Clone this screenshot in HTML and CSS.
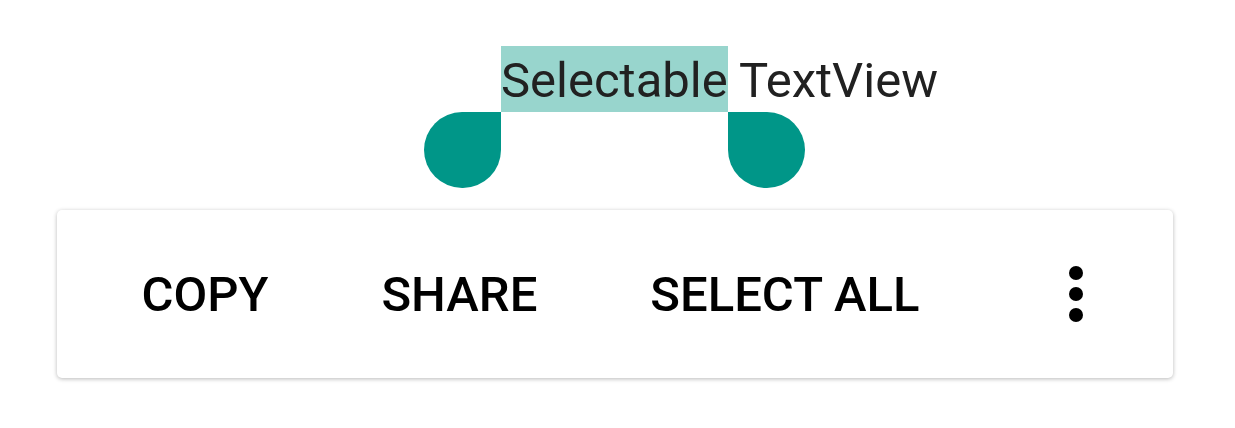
FILE: index.html
```html
<!DOCTYPE html>
<html>
<head>
<meta charset="utf-8">
<link rel="stylesheet" href="styles.css">
</head>
<body>
  <div class="page">
    <div class="text-row">
      <p class="text"><span class="sel">Selectable<span class="handle handle-left"></span><span class="handle handle-right"></span></span> TextView</p>
    </div>
    <div class="toolbar">
      <button class="btn btn-first">COPY</button>
      <button class="btn">SHARE</button>
      <button class="btn">SELECT ALL</button>
      <button class="overflow" aria-label="More options">
        <svg width="14" height="56" viewBox="0 0 14 56">
          <circle cx="7" cy="7" r="7" fill="#000"/>
          <circle cx="7" cy="28" r="7" fill="#000"/>
          <circle cx="7" cy="49" r="7" fill="#000"/>
        </svg>
      </button>
    </div>
  </div>
</body>
</html>
```

FILE: styles.css
```css
html, body {
  margin: 0;
  padding: 0;
  background: #ffffff;
}

.page {
  width: 1235px;
  height: 428px;
  font-family: Roboto, "Noto Sans", sans-serif;
}

.text-row {
  padding-top: 46px;
  padding-left: 501px;
  height: 188px;
  box-sizing: border-box;
}

.text {
  margin: 0;
  font-size: 49px;
  line-height: 62px;
  color: #212121;
  white-space: nowrap;
}

.sel {
  position: relative;
  display: inline-block;
  background: #98d5cd;
  line-height: 62px;
  padding-top: 4px;
}

.handle {
  position: absolute;
  top: 100%;
  width: 77px;
  height: 76px;
  background: #009688;
}

.handle-left {
  left: -77px;
  border-radius: 38px 0 38px 38px;
}

.handle-right {
  right: -77px;
  border-radius: 0 38px 38px 38px;
}

.toolbar {
  margin-top: 22px;
  margin-left: 57px;
  width: 1116px;
  height: 168px;
  background: #ffffff;
  border-radius: 5px;
  box-shadow: 0 1px 4px rgba(0, 0, 0, 0.28);
  display: flex;
  align-items: stretch;
  padding-left: 28px;
  box-sizing: border-box;
}

.btn {
  border: 0;
  background: transparent;
  font-family: Roboto, "Noto Sans", sans-serif;
  font-weight: 500;
  font-size: 49px;
  color: #000;
  padding: 0 56.5px;
  margin: 0;
  white-space: nowrap;
}

.overflow {
  border: 0;
  background: transparent;
  margin-left: auto;
  width: 194px;
  padding: 0;
  display: flex;
  align-items: center;
  justify-content: center;
}

.overflow svg {
  display: block;
}
```
